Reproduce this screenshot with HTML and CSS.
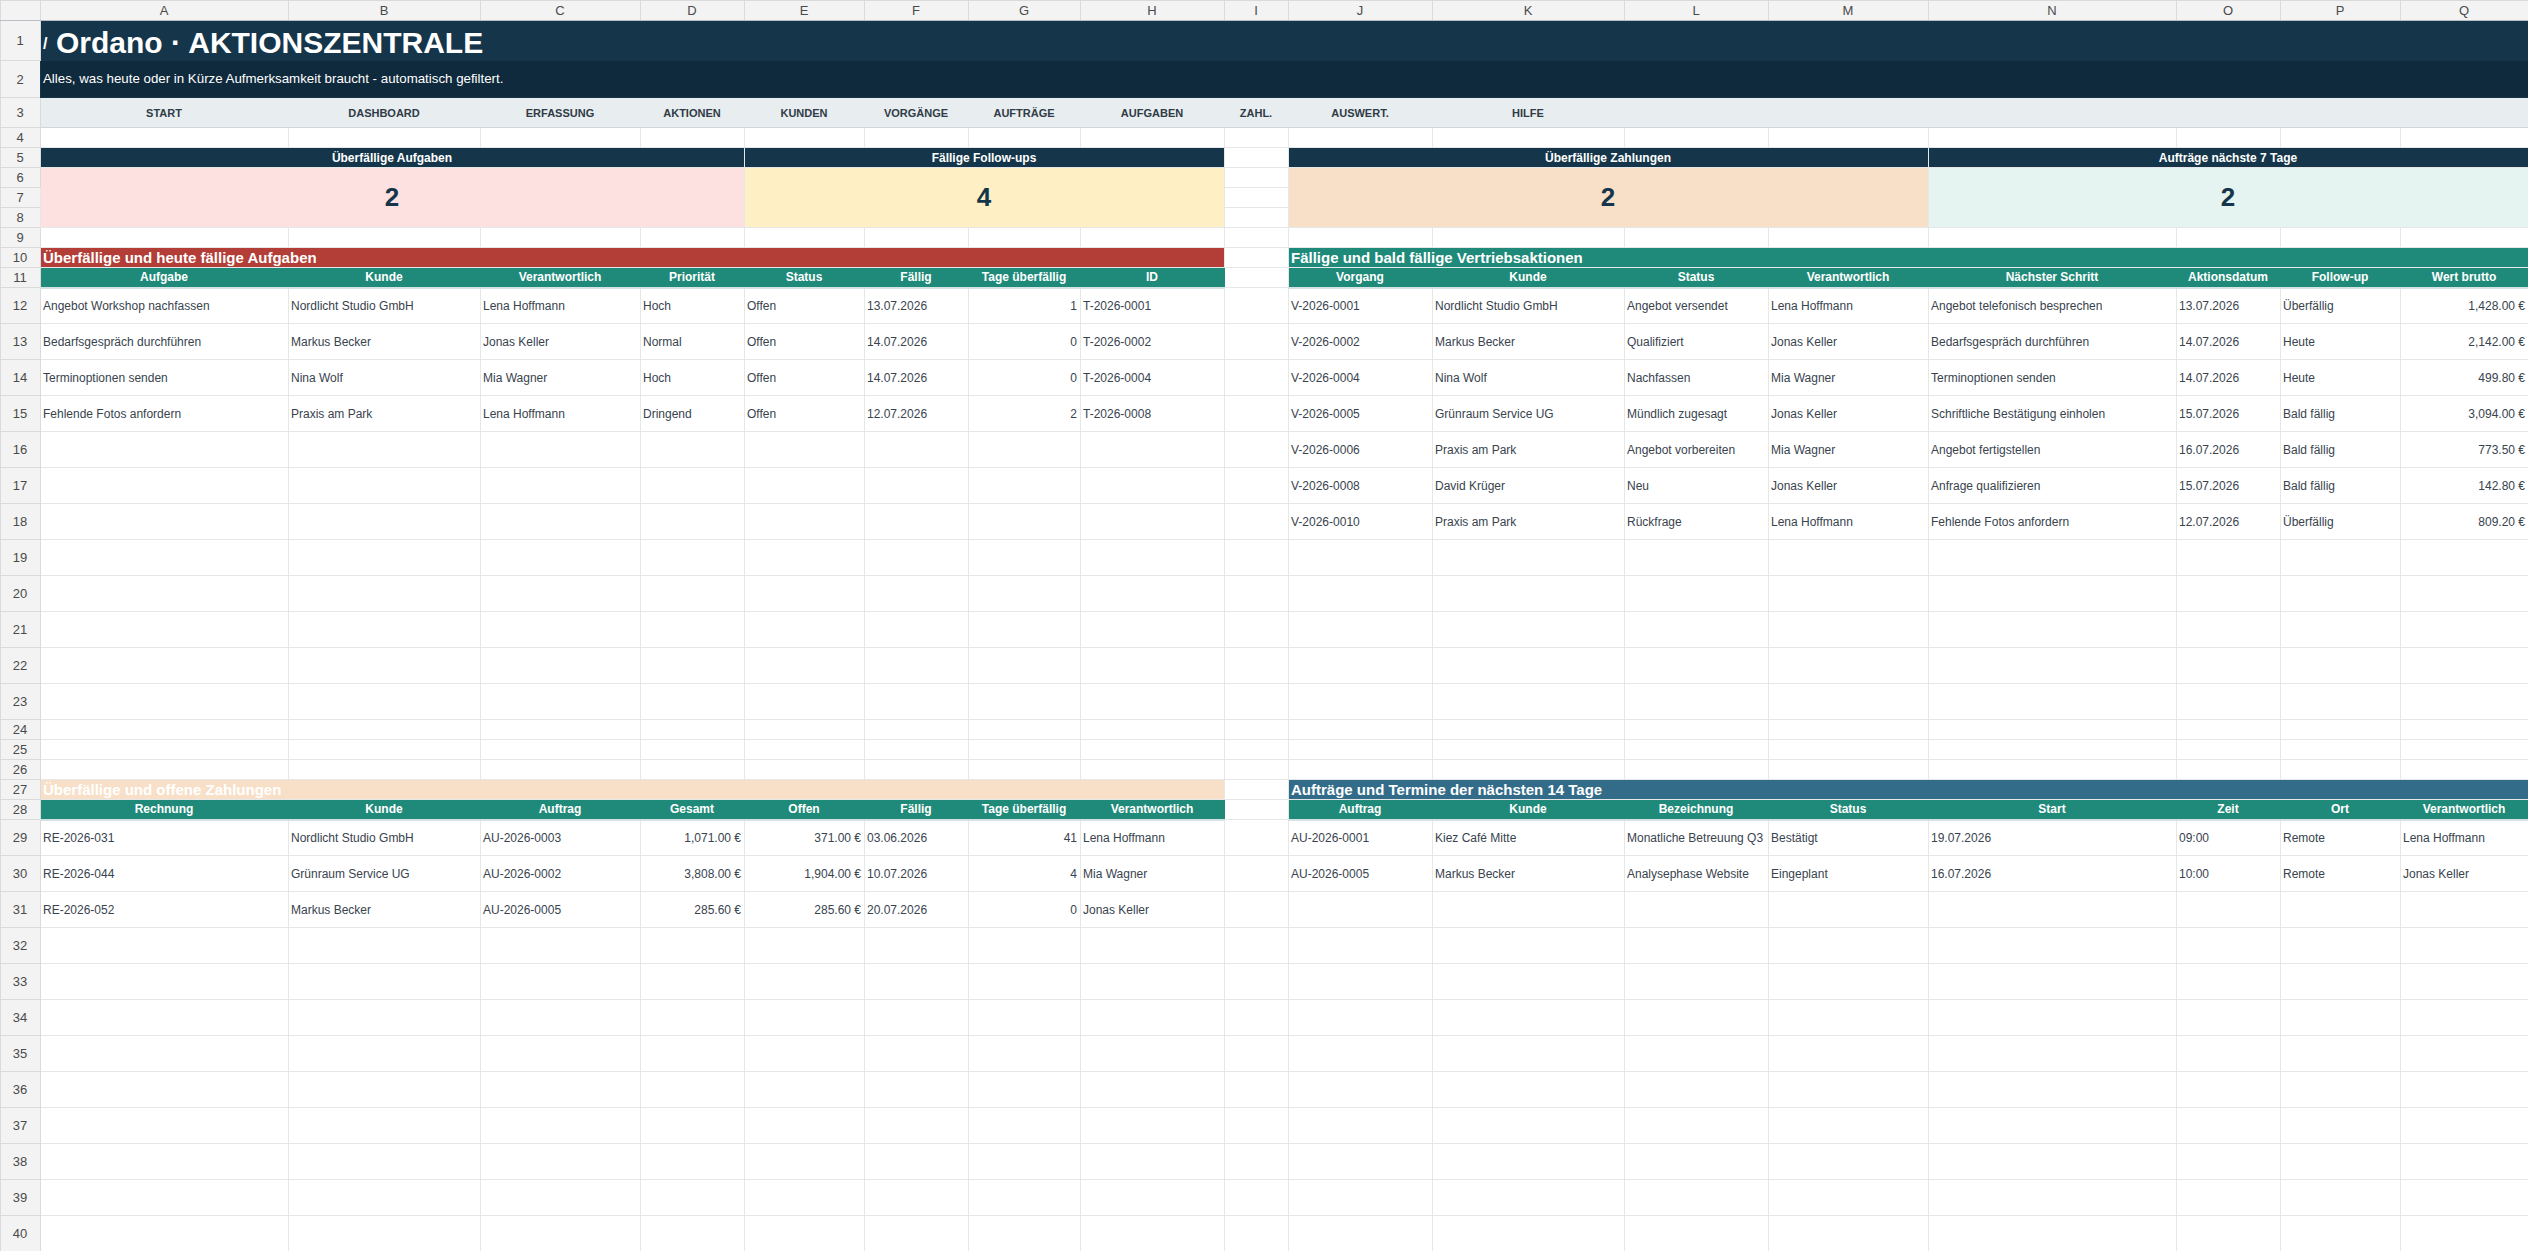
FILE: index.html
```html
<!DOCTYPE html>
<html lang="de">
<head>
    <meta charset="UTF-8">
    <title>Ordano · Aktionszentrale</title>
    <link rel="stylesheet" href="styles.css">
</head>
<body>
    <table class="sheet">
        <colgroup>
            <col class="c-rn">
            <col style="width:248px"><col style="width:192px"><col style="width:160px"><col style="width:104px">
            <col style="width:120px"><col style="width:104px"><col style="width:112px"><col style="width:144px">
            <col style="width:64px">
            <col style="width:144px"><col style="width:192px"><col style="width:144px"><col style="width:160px">
            <col style="width:248px"><col style="width:104px"><col style="width:120px"><col style="width:128px">
        </colgroup>
        <tr class="letters">
            <th></th><th>A</th><th>B</th><th>C</th><th>D</th><th>E</th><th>F</th><th>G</th><th>H</th><th>I</th><th>J</th><th>K</th><th>L</th><th>M</th><th>N</th><th>O</th><th>P</th><th>Q</th>
        </tr>
        <tr class="r-title">
            <th>1</th>
            <td colspan="17" rowspan="2" class="banner">
                <div class="title"><span class="title-mark">/</span>Ordano · AKTIONSZENTRALE</div>
                <div class="subtitle">Alles, was heute oder in Kürze Aufmerksamkeit braucht - automatisch gefiltert.</div>
            </td>
        </tr>
        <tr class="r-sub">
            <th>2</th>
        </tr>
        <tr class="r-nav nav">
            <th>3</th><td>START</td><td>DASHBOARD</td><td>ERFASSUNG</td><td>AKTIONEN</td><td>KUNDEN</td><td>VORGÄNGE</td><td>AUFTRÄGE</td><td>AUFGABEN</td><td>ZAHL.</td><td>AUSWERT.</td><td>HILFE</td><td></td><td></td><td></td><td></td><td></td><td></td>
        </tr>
        <tr class="r-s">
            <th>4</th><td></td><td></td><td></td><td></td><td></td><td></td><td></td><td></td><td></td><td></td><td></td><td></td><td></td><td></td><td></td><td></td><td></td>
        </tr>
        <tr class="r-s">
            <th>5</th><td colspan="4" class="kpi-head">Überfällige Aufgaben</td><td colspan="4" class="kpi-head">Fällige Follow-ups</td><td></td><td colspan="4" class="kpi-head">Überfällige Zahlungen</td><td colspan="4" class="kpi-head">Aufträge nächste 7 Tage</td>
        </tr>
        <tr class="r-s">
            <th>6</th><td colspan="4" rowspan="3" class="kpi-val pink">2</td><td colspan="4" rowspan="3" class="kpi-val yellow">4</td><td></td><td colspan="4" rowspan="3" class="kpi-val peach">2</td><td colspan="4" rowspan="3" class="kpi-val mint">2</td>
        </tr>
        <tr class="r-s"><th>7</th><td></td></tr>
        <tr class="r-s"><th>8</th><td></td></tr>
        <tr class="r-s">
            <th>9</th><td></td><td></td><td></td><td></td><td></td><td></td><td></td><td></td><td></td><td></td><td></td><td></td><td></td><td></td><td></td><td></td><td></td>
        </tr>
        <tr class="r-s">
            <th>10</th><td colspan="8" class="sec sec-red">Überfällige und heute fällige Aufgaben</td><td></td><td colspan="8" class="sec sec-teal">Fällige und bald fällige Vertriebsaktionen</td>
        </tr>
        <tr class="r-s heads">
            <th>11</th><td class="hd">Aufgabe</td><td class="hd">Kunde</td><td class="hd">Verantwortlich</td><td class="hd">Priorität</td><td class="hd">Status</td><td class="hd">Fällig</td><td class="hd">Tage überfällig</td><td class="hd">ID</td><td></td>
            <td class="hd">Vorgang</td><td class="hd">Kunde</td><td class="hd">Status</td><td class="hd">Verantwortlich</td><td class="hd">Nächster Schritt</td><td class="hd">Aktionsdatum</td><td class="hd">Follow-up</td><td class="hd">Wert brutto</td>
        </tr>
        <tr class="r-d">
            <th>12</th><td>Angebot Workshop nachfassen</td><td>Nordlicht Studio GmbH</td><td>Lena Hoffmann</td><td>Hoch</td><td>Offen</td><td>13.07.2026</td><td class="num">1</td><td>T-2026-0001</td><td></td>
            <td>V-2026-0001</td><td>Nordlicht Studio GmbH</td><td>Angebot versendet</td><td>Lena Hoffmann</td><td>Angebot telefonisch besprechen</td><td>13.07.2026</td><td>Überfällig</td><td class="num">1,428.00 €</td>
        </tr>
        <tr class="r-d">
            <th>13</th><td>Bedarfsgespräch durchführen</td><td>Markus Becker</td><td>Jonas Keller</td><td>Normal</td><td>Offen</td><td>14.07.2026</td><td class="num">0</td><td>T-2026-0002</td><td></td>
            <td>V-2026-0002</td><td>Markus Becker</td><td>Qualifiziert</td><td>Jonas Keller</td><td>Bedarfsgespräch durchführen</td><td>14.07.2026</td><td>Heute</td><td class="num">2,142.00 €</td>
        </tr>
        <tr class="r-d">
            <th>14</th><td>Terminoptionen senden</td><td>Nina Wolf</td><td>Mia Wagner</td><td>Hoch</td><td>Offen</td><td>14.07.2026</td><td class="num">0</td><td>T-2026-0004</td><td></td>
            <td>V-2026-0004</td><td>Nina Wolf</td><td>Nachfassen</td><td>Mia Wagner</td><td>Terminoptionen senden</td><td>14.07.2026</td><td>Heute</td><td class="num">499.80 €</td>
        </tr>
        <tr class="r-d">
            <th>15</th><td>Fehlende Fotos anfordern</td><td>Praxis am Park</td><td>Lena Hoffmann</td><td>Dringend</td><td>Offen</td><td>12.07.2026</td><td class="num">2</td><td>T-2026-0008</td><td></td>
            <td>V-2026-0005</td><td>Grünraum Service UG</td><td>Mündlich zugesagt</td><td>Jonas Keller</td><td>Schriftliche Bestätigung einholen</td><td>15.07.2026</td><td>Bald fällig</td><td class="num">3,094.00 €</td>
        </tr>
        <tr class="r-d">
            <th>16</th><td></td><td></td><td></td><td></td><td></td><td></td><td></td><td></td><td></td>
            <td>V-2026-0006</td><td>Praxis am Park</td><td>Angebot vorbereiten</td><td>Mia Wagner</td><td>Angebot fertigstellen</td><td>16.07.2026</td><td>Bald fällig</td><td class="num">773.50 €</td>
        </tr>
        <tr class="r-d">
            <th>17</th><td></td><td></td><td></td><td></td><td></td><td></td><td></td><td></td><td></td>
            <td>V-2026-0008</td><td>David Krüger</td><td>Neu</td><td>Jonas Keller</td><td>Anfrage qualifizieren</td><td>15.07.2026</td><td>Bald fällig</td><td class="num">142.80 €</td>
        </tr>
        <tr class="r-d">
            <th>18</th><td></td><td></td><td></td><td></td><td></td><td></td><td></td><td></td><td></td>
            <td>V-2026-0010</td><td>Praxis am Park</td><td>Rückfrage</td><td>Lena Hoffmann</td><td>Fehlende Fotos anfordern</td><td>12.07.2026</td><td>Überfällig</td><td class="num">809.20 €</td>
        </tr>
        <tr class="r-d"><th>19</th><td></td><td></td><td></td><td></td><td></td><td></td><td></td><td></td><td></td><td></td><td></td><td></td><td></td><td></td><td></td><td></td><td></td></tr>
        <tr class="r-d"><th>20</th><td></td><td></td><td></td><td></td><td></td><td></td><td></td><td></td><td></td><td></td><td></td><td></td><td></td><td></td><td></td><td></td><td></td></tr>
        <tr class="r-d"><th>21</th><td></td><td></td><td></td><td></td><td></td><td></td><td></td><td></td><td></td><td></td><td></td><td></td><td></td><td></td><td></td><td></td><td></td></tr>
        <tr class="r-d"><th>22</th><td></td><td></td><td></td><td></td><td></td><td></td><td></td><td></td><td></td><td></td><td></td><td></td><td></td><td></td><td></td><td></td><td></td></tr>
        <tr class="r-d"><th>23</th><td></td><td></td><td></td><td></td><td></td><td></td><td></td><td></td><td></td><td></td><td></td><td></td><td></td><td></td><td></td><td></td><td></td></tr>
        <tr class="r-s"><th>24</th><td></td><td></td><td></td><td></td><td></td><td></td><td></td><td></td><td></td><td></td><td></td><td></td><td></td><td></td><td></td><td></td><td></td></tr>
        <tr class="r-s"><th>25</th><td></td><td></td><td></td><td></td><td></td><td></td><td></td><td></td><td></td><td></td><td></td><td></td><td></td><td></td><td></td><td></td><td></td></tr>
        <tr class="r-s"><th>26</th><td></td><td></td><td></td><td></td><td></td><td></td><td></td><td></td><td></td><td></td><td></td><td></td><td></td><td></td><td></td><td></td><td></td></tr>
        <tr class="r-s">
            <th>27</th><td colspan="8" class="sec sec-peach">Überfällige und offene Zahlungen</td><td></td><td colspan="8" class="sec sec-blue">Aufträge und Termine der nächsten 14 Tage</td>
        </tr>
        <tr class="r-s heads">
            <th>28</th><td class="hd">Rechnung</td><td class="hd">Kunde</td><td class="hd">Auftrag</td><td class="hd">Gesamt</td><td class="hd">Offen</td><td class="hd">Fällig</td><td class="hd">Tage überfällig</td><td class="hd">Verantwortlich</td><td></td>
            <td class="hd">Auftrag</td><td class="hd">Kunde</td><td class="hd">Bezeichnung</td><td class="hd">Status</td><td class="hd">Start</td><td class="hd">Zeit</td><td class="hd">Ort</td><td class="hd">Verantwortlich</td>
        </tr>
        <tr class="r-d">
            <th>29</th><td>RE-2026-031</td><td>Nordlicht Studio GmbH</td><td>AU-2026-0003</td><td class="num">1,071.00 €</td><td class="num">371.00 €</td><td>03.06.2026</td><td class="num">41</td><td>Lena Hoffmann</td><td></td>
            <td>AU-2026-0001</td><td>Kiez Café Mitte</td><td>Monatliche Betreuung Q3</td><td>Bestätigt</td><td>19.07.2026</td><td>09:00</td><td>Remote</td><td>Lena Hoffmann</td>
        </tr>
        <tr class="r-d">
            <th>30</th><td>RE-2026-044</td><td>Grünraum Service UG</td><td>AU-2026-0002</td><td class="num">3,808.00 €</td><td class="num">1,904.00 €</td><td>10.07.2026</td><td class="num">4</td><td>Mia Wagner</td><td></td>
            <td>AU-2026-0005</td><td>Markus Becker</td><td>Analysephase Website</td><td>Eingeplant</td><td>16.07.2026</td><td>10:00</td><td>Remote</td><td>Jonas Keller</td>
        </tr>
        <tr class="r-d">
            <th>31</th><td>RE-2026-052</td><td>Markus Becker</td><td>AU-2026-0005</td><td class="num">285.60 €</td><td class="num">285.60 €</td><td>20.07.2026</td><td class="num">0</td><td>Jonas Keller</td><td></td>
            <td></td><td></td><td></td><td></td><td></td><td></td><td></td><td></td>
        </tr>
        <tr class="r-d"><th>32</th><td></td><td></td><td></td><td></td><td></td><td></td><td></td><td></td><td></td><td></td><td></td><td></td><td></td><td></td><td></td><td></td><td></td></tr>
        <tr class="r-d"><th>33</th><td></td><td></td><td></td><td></td><td></td><td></td><td></td><td></td><td></td><td></td><td></td><td></td><td></td><td></td><td></td><td></td><td></td></tr>
        <tr class="r-d"><th>34</th><td></td><td></td><td></td><td></td><td></td><td></td><td></td><td></td><td></td><td></td><td></td><td></td><td></td><td></td><td></td><td></td><td></td></tr>
        <tr class="r-d"><th>35</th><td></td><td></td><td></td><td></td><td></td><td></td><td></td><td></td><td></td><td></td><td></td><td></td><td></td><td></td><td></td><td></td><td></td></tr>
        <tr class="r-d"><th>36</th><td></td><td></td><td></td><td></td><td></td><td></td><td></td><td></td><td></td><td></td><td></td><td></td><td></td><td></td><td></td><td></td><td></td></tr>
        <tr class="r-d"><th>37</th><td></td><td></td><td></td><td></td><td></td><td></td><td></td><td></td><td></td><td></td><td></td><td></td><td></td><td></td><td></td><td></td><td></td></tr>
        <tr class="r-d"><th>38</th><td></td><td></td><td></td><td></td><td></td><td></td><td></td><td></td><td></td><td></td><td></td><td></td><td></td><td></td><td></td><td></td><td></td></tr>
        <tr class="r-d"><th>39</th><td></td><td></td><td></td><td></td><td></td><td></td><td></td><td></td><td></td><td></td><td></td><td></td><td></td><td></td><td></td><td></td><td></td></tr>
        <tr class="r-d"><th>40</th><td></td><td></td><td></td><td></td><td></td><td></td><td></td><td></td><td></td><td></td><td></td><td></td><td></td><td></td><td></td><td></td><td></td></tr>
    </table>
</body>
</html>
```

FILE: styles.css
```css
html,
body {
    margin: 0;
    padding: 0;
    background: #fff;
}

body {
    font-family: "Liberation Sans", Arial, sans-serif;
    font-size: 12px;
    color: #38434e;
    overflow: hidden;
}

.sheet {
    border-collapse: collapse;
    table-layout: fixed;
    width: 2528px;
}
.sheet col.c-rn {
    width: 40px;
}
.sheet td,
.sheet th {
    border: 1px solid #e6e7e9;
    padding: 0 3px 0 2px;
    white-space: nowrap;
    overflow: hidden;
    vertical-align: middle;
}
.sheet th {
    background: #f3f3f3;
    color: #4a4a4a;
    font-weight: normal;
    font-size: 13px;
    text-align: center;
    border-color: #dadada;
}

/* column letters */
.letters {
    height: 20px;
}
.letters th {
    border-bottom: 1px solid #b9bec4;
}

.r-title { height: 40px; }
.r-sub { height: 37px; }
.r-nav { height: 30px; }
.r-s { height: 20px; }
.r-d { height: 36px; }

/* title + subtitle share one merged block */
.sheet td.banner {
    padding: 0;
    background: #0f2a3c;
    border-color: #15364a;
    vertical-align: top;
}
.banner .title {
    height: 40px;
    box-sizing: border-box;
    padding: 5px 0 0 2px;
    background: #15364a;
    color: #fff;
    font-size: 30px;
    font-weight: bold;
    line-height: 34px;
}
.title-mark {
    display: inline-block;
    font-size: 16px;
    width: 13px;
    vertical-align: 4px;
}
.banner .subtitle {
    height: 36px;
    padding-left: 2px;
    background: #0f2a3c;
    color: #fff;
    font-size: 13.3px;
    line-height: 36px;
}

/* nav row */
.nav td {
    background: #e8edf0;
    color: #2f3b46;
    font-size: 11px;
    font-weight: bold;
    text-align: center;
    border-color: #e8edf0;
    border-bottom: 1px solid #cfd6dc;
}

/* KPI boxes */
.kpi-head {
    background: #15364a;
    color: #fff;
    font-weight: bold;
    text-align: center;
    border-color: #15364a;
    padding-top: 3px;
}
.kpi-val {
    font-size: 26px;
    font-weight: bold;
    color: #15364a;
    text-align: center;
    border-color: #d6dadf;
}
.pink { background: #fde1e1; }
.yellow { background: #fef0c4; }
.peach { background: #f8dfc8; }
.mint { background: #e5f4f0; }

/* section bars */
.sec {
    color: #fff;
    font-size: 15px;
    font-weight: bold;
    padding-top: 2px;
}
.sec-red { background: #b33d37; border-color: #b33d37; }
.sec-teal { background: #1f8a79; border-color: #1f8a79; }
.sec-peach { background: #f8dfc8; border-color: #f8dfc8; }
.sec-blue { background: #336c89; border-color: #336c89; }

.heads td.hd {
    background: #1f8a79;
    color: #fff;
    font-weight: bold;
    text-align: center;
    border-color: #1f8a79;
    border-bottom: 2px solid #d5e2e4;
}

.num {
    text-align: right;
}
```
